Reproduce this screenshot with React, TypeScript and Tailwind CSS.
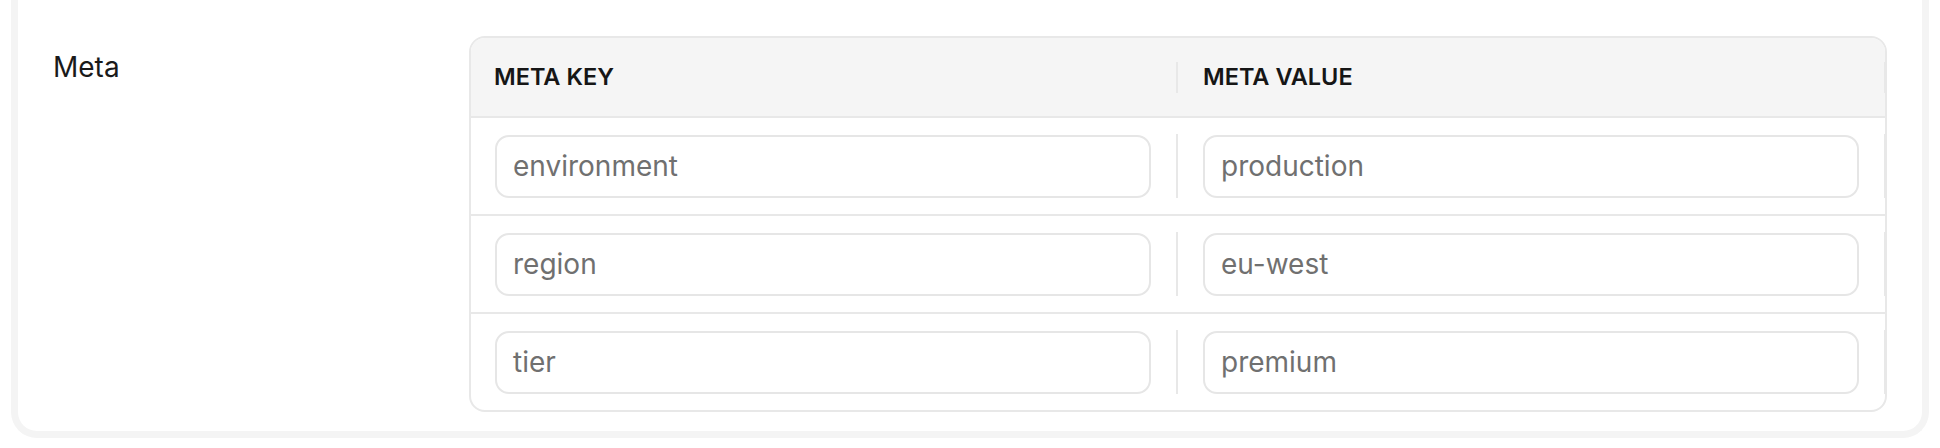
const ROWS = [
  { key: "environment", value: "production" },
  { key: "region", value: "eu-west" },
  { key: "tier", value: "premium" },
];

function Divider({ tall }: { tall?: boolean }) {
  return <div className={`w-[2px] shrink-0 bg-[#e8e8e8] ${tall ? "h-[64px]" : "h-[31px]"}`} />;
}

function Field({ value }: { value: string }) {
  return (
    <div className="flex h-[63px] w-full items-center rounded-[14px] border-2 border-[#e6e6e6] bg-white px-[16px] text-[28px] text-[#707070]">
      {value}
    </div>
  );
}

export default function App() {
  return (
    <div
      className="h-[448px] w-[1940px] bg-white pl-[11px] pr-[11px]"
      style={{ fontFamily: "Inter, 'Noto Sans', sans-serif" }}
    >
      <div className="flex rounded-b-[26px] border-[7px] border-t-0 border-[#f4f4f4] pb-[19px] pl-[35px] pr-[35px] pt-[36px]">
        {/* Label */}
        <div className="w-[416px] shrink-0 pt-[14px] text-[28px] leading-[34px] text-[#1a1a1a]">Meta</div>

        {/* Table */}
        <div className="min-w-0 flex-1 overflow-hidden rounded-[16px] border-2 border-[#e8e8e8]">
          <div className="flex h-[80px] items-center border-b-2 border-[#e8e8e8] bg-[#f5f5f5]">
            <div className="w-[705px] shrink-0 pl-[23px] text-[23.5px] font-semibold text-[#161616]">META KEY</div>
            <Divider />
            <div className="w-[706px] shrink-0 pl-[25px] text-[23.5px] font-semibold text-[#161616]">META VALUE</div>
            <Divider />
            <div className="w-[200px] shrink-0" />
          </div>
          {ROWS.map((r, i) => (
            <div
              key={r.key}
              className={`flex items-center ${i < ROWS.length - 1 ? "h-[98px] border-b-2 border-[#e8e8e8]" : "h-[96px]"}`}
            >
              <div className="w-[705px] shrink-0 pl-[24px] pr-[25px]">
                <Field value={r.key} />
              </div>
              <Divider tall />
              <div className="w-[706px] shrink-0 pl-[25px] pr-[25px]">
                <Field value={r.value} />
              </div>
              <Divider tall />
              <div className="w-[200px] shrink-0" />
            </div>
          ))}
        </div>
      </div>
    </div>
  );
}
